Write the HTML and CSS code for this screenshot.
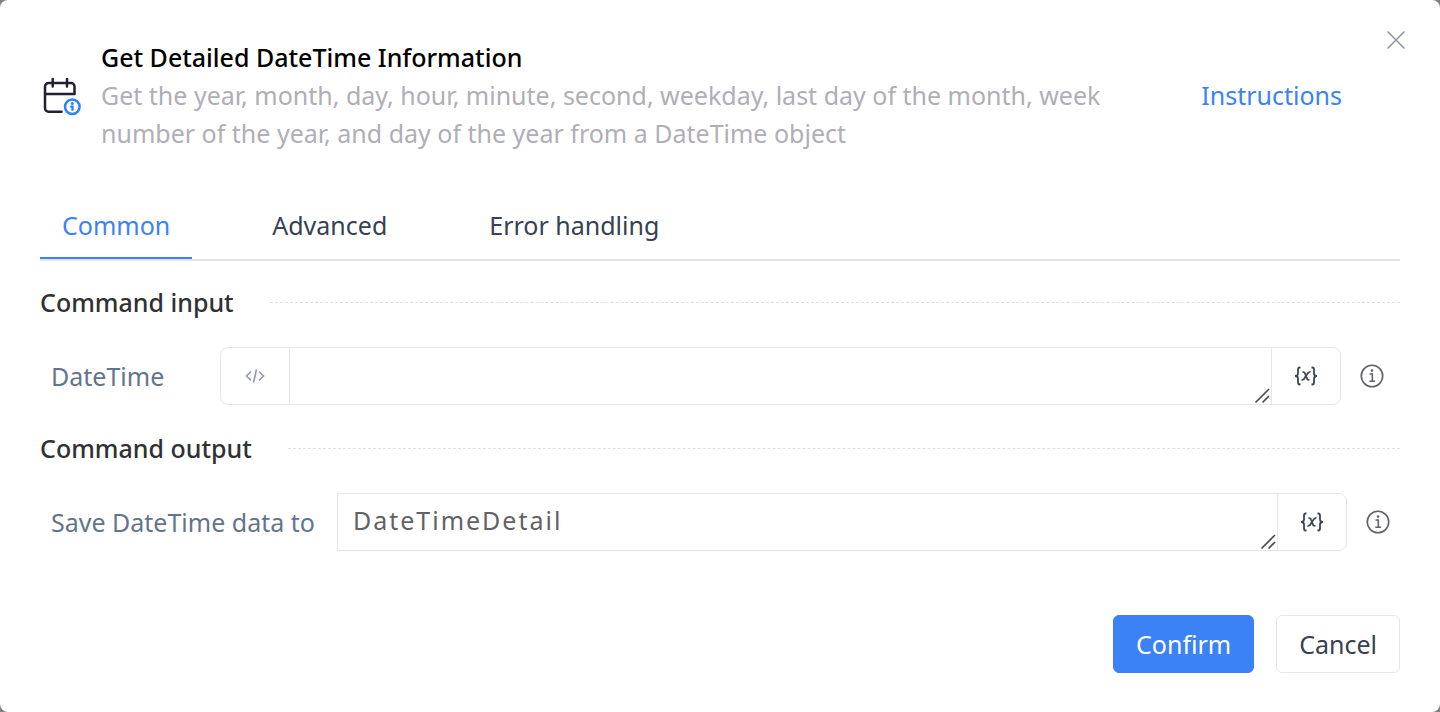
FILE: index.html
```html
<!DOCTYPE html>
<html lang="en">
<head>
<meta charset="utf-8">
<title>Get Detailed DateTime Information</title>
<link rel="stylesheet" href="styles.css">
</head>
<body>
<main class="dialog">
  <header class="header">
    <svg class="command-icon" viewBox="0 0 42 42" fill="none" aria-hidden="true">
      <path d="M21.500 37.700H8.500a3.500 3.500 0 0 1-3.500-3.500V12.500A3.500 3.500 0 0 1 8.500 9H31a3.500 3.500 0 0 1 3.500 3.500V20H5M12.700 5v7.500M27 5v7.500" stroke="#231f32" stroke-width="2.5" stroke-linecap="round" stroke-linejoin="round"/>
      <circle cx="32.300" cy="32.700" r="7.300" stroke="#2a82ff" stroke-width="2.500"/>
      <circle cx="32.300" cy="29.500" r="1.500" fill="#2a82ff"/>
      <path d="M30.300 32.700h2.200v4" stroke="#2a82ff" stroke-width="2.300"/>
    </svg>
    <div class="intro">
      <h1 class="title">Get Detailed DateTime Information</h1>
      <p class="description">Get the year, month, day, hour, minute, second, weekday, last day of the month, week number of the year, and day of the year from a DateTime object</p>
    </div>
    <a class="instructions" href="#instructions">Instructions</a>
    <button class="close" type="button" aria-label="Close">
      <svg width="20" height="20" viewBox="0 0 20 20" fill="none" aria-hidden="true"><path d="M1.500 1.500l17 17M18.500 1.500l-17 17" stroke="#909399" stroke-width="1.5"/></svg>
    </button>
  </header>

  <nav class="tabs" role="tablist">
    <button class="tab tab-active" type="button" role="tab" aria-selected="true">Common</button>
    <button class="tab" type="button" role="tab" aria-selected="false">Advanced</button>
    <button class="tab" type="button" role="tab" aria-selected="false">Error handling</button>
  </nav>

  <section class="section">
    <h2 class="section-title">Command input</h2>
    <div class="row">
      <label class="label label-input" for="datetime">DateTime</label>
      <div class="field">
        <button class="addon addon-start" type="button" aria-label="Expression mode">
          <svg width="20" height="16" viewBox="0 0 20 16" fill="none" stroke="#9299a5" stroke-width="1.6" aria-hidden="true"><path d="M6 3.500L1.500 8 6 12.500M14 3.500L18.500 8 14 12.500M11.500 1.500l-3 13"/></svg>
        </button>
        <div class="box">
          <textarea class="text" id="datetime" rows="1"></textarea>
          <svg class="grip" width="16" height="16" viewBox="0 0 16 16" fill="none" stroke="#4d4d4d" stroke-width="1.7" aria-hidden="true"><path d="M1.500 14.500L15 1M8.500 14.500L15 8"/></svg>
        </div>
        <button class="addon addon-end" type="button" aria-label="Insert variable">
          <svg width="24" height="20" viewBox="0 0 24 20" fill="none" stroke="#3c4656" stroke-width="1.8" aria-hidden="true"><path d="M6.500 1.500H5.800Q4 1.500 4 3.500V7.500Q4 10 1 10Q4 10 4 12.500V16.500Q4 18.500 5.800 18.500H6.500M17.500 1.500H18.200Q20 1.500 20 3.500V7.500Q20 10 23 10Q20 10 20 12.500V16.500Q20 18.500 18.200 18.500H17.500M8.500 6.300Q10.300 5.500 11 7.500L13 12.500Q13.500 14.500 15.500 13.500M16.500 6Q14.500 5.500 12.500 9L11 11.500Q9.500 14.500 7.500 13.800"/></svg>
        </button>
      </div>
      <button class="info" type="button" aria-label="About DateTime">
        <svg width="24" height="24" viewBox="0 0 24 24" fill="none" stroke="#606266" stroke-width="1.6" aria-hidden="true"><circle cx="12" cy="12" r="10.700"/><path d="M9.500 10h2.800v7M9.300 17.200h5.800"/><circle cx="12" cy="6.500" r="1.300" fill="#606266" stroke="none"/></svg>
      </button>
    </div>
  </section>

  <section class="section">
    <h2 class="section-title">Command output</h2>
    <div class="row row-output">
      <label class="label" for="output">Save DateTime data to</label>
      <div class="field">
        <div class="box">
          <textarea class="text" id="output" rows="1">DateTimeDetail</textarea>
          <svg class="grip" width="16" height="16" viewBox="0 0 16 16" fill="none" stroke="#4d4d4d" stroke-width="1.7" aria-hidden="true"><path d="M1.500 14.500L15 1M8.500 14.500L15 8"/></svg>
        </div>
        <button class="addon addon-end" type="button" aria-label="Insert variable">
          <svg width="24" height="20" viewBox="0 0 24 20" fill="none" stroke="#3c4656" stroke-width="1.8" aria-hidden="true"><path d="M6.500 1.500H5.800Q4 1.500 4 3.500V7.500Q4 10 1 10Q4 10 4 12.500V16.500Q4 18.500 5.800 18.500H6.500M17.500 1.500H18.200Q20 1.500 20 3.500V7.500Q20 10 23 10Q20 10 20 12.500V16.500Q20 18.500 18.200 18.500H17.500M8.500 6.300Q10.300 5.500 11 7.500L13 12.500Q13.500 14.500 15.500 13.500M16.500 6Q14.500 5.500 12.500 9L11 11.500Q9.500 14.500 7.500 13.800"/></svg>
        </button>
      </div>
      <button class="info" type="button" aria-label="About the output variable">
        <svg width="24" height="24" viewBox="0 0 24 24" fill="none" stroke="#606266" stroke-width="1.6" aria-hidden="true"><circle cx="12" cy="12" r="10.700"/><path d="M9.500 10h2.800v7M9.300 17.200h5.800"/><circle cx="12" cy="6.500" r="1.300" fill="#606266" stroke="none"/></svg>
      </button>
    </div>
  </section>

  <footer class="footer">
    <button class="button button-primary" type="button">Confirm</button>
    <button class="button" type="button">Cancel</button>
  </footer>
</main>
</body>
</html>
```
FILE: styles.css
```css
* {
  box-sizing: border-box;
}

body {
  margin: 0;
  background: #7f7f7f;
  color: #374151;
  font-family: "Noto Sans", "Open Sans", sans-serif;
  font-size: 25px;
  line-height: 38px;
}

button,
textarea {
  margin: 0;
  padding: 0;
  border: 0;
  background: none;
  color: inherit;
  font: inherit;
}

svg {
  display: block;
}

.dialog {
  display: flex;
  flex-direction: column;
  min-height: 100vh;
  padding: 38px 40px;
  border-radius: 8px;
  background: #fff;
}

.header {
  position: relative;
  display: flex;
  align-items: center;
  padding-right: 58px;
}

.command-icon {
  flex: none;
  width: 42px;
  height: 42px;
  margin-right: 19px;
}

.intro {
  flex: 1;
  padding-right: 72px;
}

.title,
.section-title {
  margin: 0;
  font-size: 25px;
  font-weight: 500;
}

.title {
  color: #000;
}

.description {
  margin: 0;
  color: #b0aeb6;
}

.instructions {
  color: #3b82f6;
  text-decoration: none;
}

.close {
  position: absolute;
  top: -8px;
  right: -6px;
}

.tabs {
  display: flex;
  gap: 58px;
  margin: 40px 0 22px;
  border-bottom: 2px solid #e4e4eb;
}

.tab {
  padding: 14px 22px 13px;
  border-bottom: 2px solid transparent;
}

.tab-active {
  border-color: #3b82f6;
  color: #3b82f6;
}

.section {
  margin-bottom: 24px;
}

.section-title {
  display: flex;
  align-items: center;
  gap: 36px;
  color: #303133;
}

.section-title::after {
  content: "";
  flex: 1;
  border-top: 1px dashed #dcdfe6;
}

.row {
  display: flex;
  align-items: center;
  margin-top: 26px;
  padding: 0 16px 0 11px;
}

.row-output {
  padding-right: 10px;
}

.label {
  margin-right: 22px;
  color: #64748b;
}

.label-input {
  width: 147px;
}

.field {
  display: flex;
  flex: 1;
  height: 58px;
  border: 1px solid #e5e7eb;
  border-radius: 8px;
}

.row-output .field {
  border-radius: 0 8px 8px 0;
}

.addon {
  display: flex;
  align-items: center;
  justify-content: center;
  width: 69px;
}

.addon-start {
  border-right: 1px solid #e5e7eb;
}

.addon-end {
  border-left: 1px solid #e5e7eb;
}

.box {
  position: relative;
  flex: 1;
}

.text {
  display: block;
  width: 100%;
  height: 100%;
  padding: 7px 15px;
  outline: 0;
  overflow: hidden;
  resize: none;
  color: #606266;
  letter-spacing: 2px;
}

.grip {
  position: absolute;
  right: 1px;
  bottom: 0;
}

.info {
  margin-left: 19px;
}

.footer {
  display: flex;
  justify-content: flex-end;
  gap: 22px;
  margin-top: 40px;
}

.button {
  padding: 9px 22px;
  border: 1px solid #e5e7eb;
  border-radius: 6px;
}

.button-primary {
  border-color: #3b82f6;
  background: #3b82f6;
  color: #fff;
}
```
